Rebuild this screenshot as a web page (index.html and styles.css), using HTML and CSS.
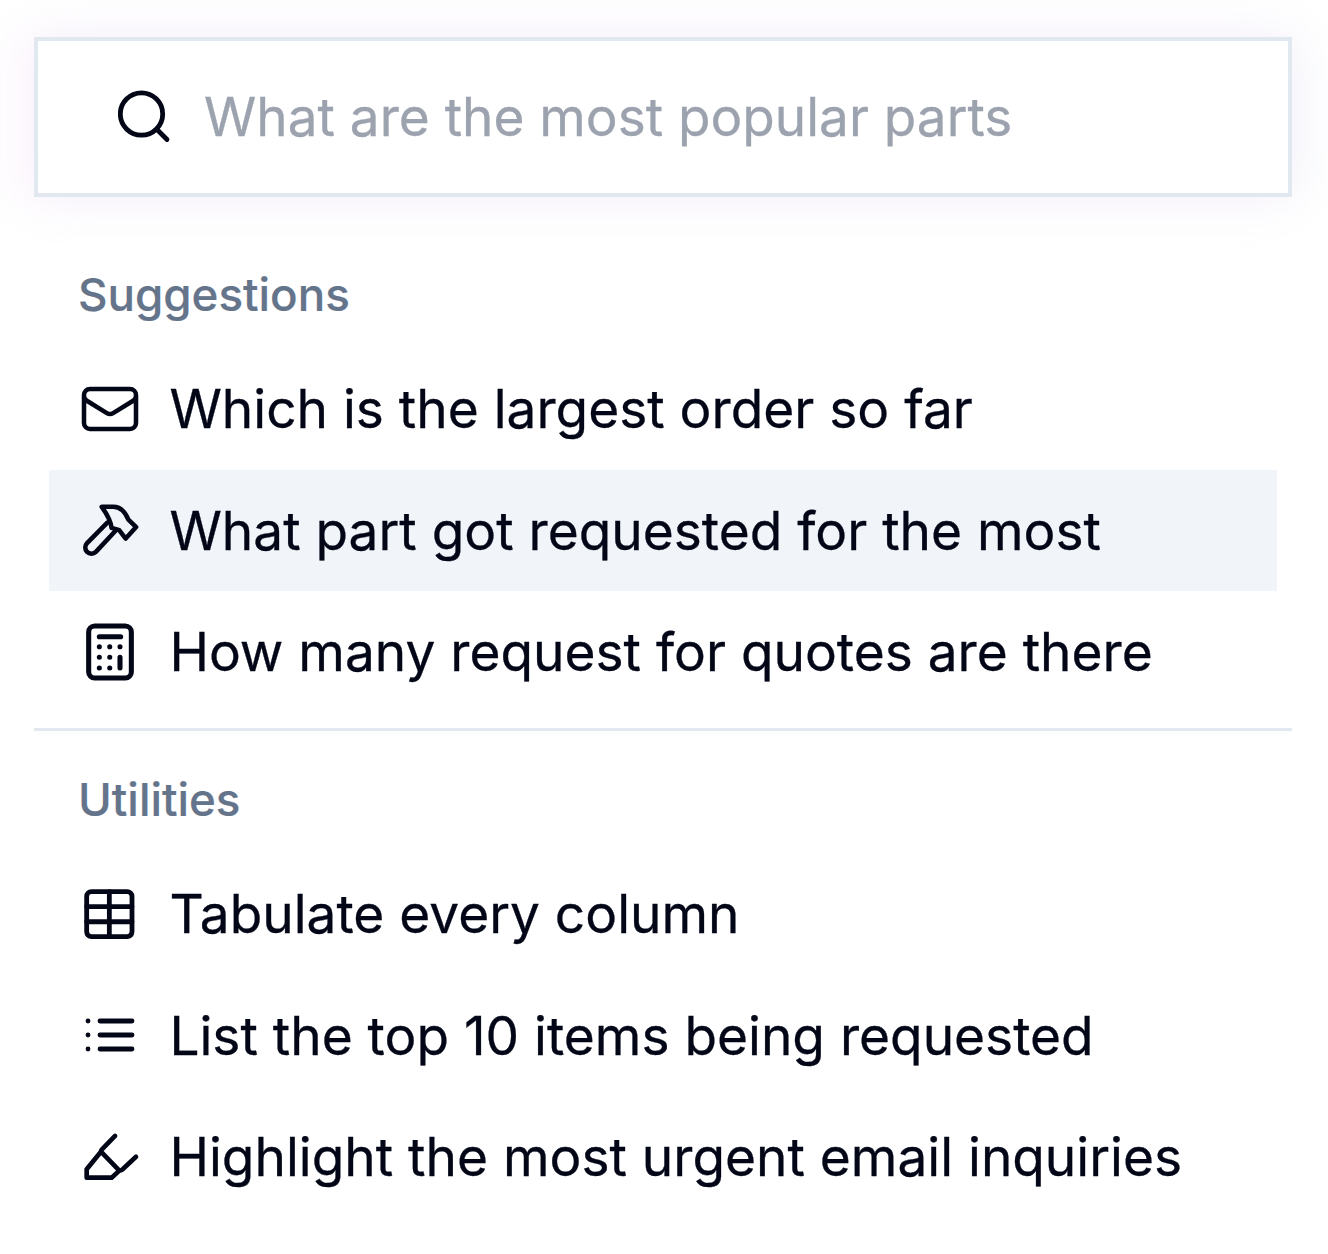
FILE: index.html
```html
<!DOCTYPE html>
<html lang="en">
<head>
    <meta charset="UTF-8">
    <title>Command menu</title>
    <link rel="stylesheet" href="styles.css">
</head>
<body>
<div class="menu">
    <!-- Search -->
    <div class="search">
        <svg class="search-icon" viewBox="0 0 54 54" fill="none" stroke="currentColor" stroke-width="4.8" stroke-linecap="round">
            <circle cx="23.500" cy="25" r="21.200"/>
            <path d="M39 40.500l10 10"/>
        </svg>
        <span class="placeholder">What are the most popular parts</span>
    </div>

    <!-- Suggestions -->
    <div class="group-title suggestions">Suggestions</div>
    <div class="item">
        <svg class="icon" viewBox="0 0 24 24" fill="none" stroke="currentColor" stroke-width="1.7" stroke-linecap="round" stroke-linejoin="round">
            <path d="M21.750 6.750v10.500a2.250 2.250 0 0 1-2.250 2.250h-15a2.250 2.250 0 0 1-2.250-2.250V6.750m19.500 0A2.250 2.250 0 0 0 19.500 4.500h-15a2.250 2.250 0 0 0-2.250 2.250m19.500 0v.243a2.250 2.250 0 0 1-1.070 1.916l-7.500 4.615a2.250 2.250 0 0 1-2.360 0L3.320 8.910a2.250 2.250 0 0 1-1.070-1.916V6.750"/>
        </svg>
        <span>Which is the largest order so far</span>
    </div>
    <div class="item active">
        <svg class="icon" viewBox="0 0 24 24" fill="none" stroke="currentColor" stroke-width="1.7" stroke-linecap="round" stroke-linejoin="round">
            <path d="M8.900 3.300h4.300c2.400 0 4.400 1.700 5.700 4.800l2.900 2.800-3.900 4.300-2.400-3.100-2.900-.9c-.3-2.500-1.300-4.600-3.700-7.900z"/>
            <path d="M11 9.200 3.400 16.900c-.9.9-.9 2.400 0 3.300s2.400.9 3.300 0l7.300-7.800"/>
        </svg>
        <span>What part got requested for the most</span>
    </div>
    <div class="item">
        <svg class="icon" viewBox="0 0 24 24" fill="none" stroke="currentColor" stroke-width="1.9" stroke-linecap="round" stroke-linejoin="round">
            <rect x="4" y="2.250" width="16" height="19.500" rx="2.250"/>
            <path d="M8 6.250h8M15.750 14v4M8 10h.01M11.900 10h.01M15.750 10h.01M8 14h.01M11.900 14h.01M8 18h.01M11.900 18h.01"/>
        </svg>
        <span>How many request for quotes are there</span>
    </div>

    <div class="divider"></div>

    <!-- Utilities -->
    <div class="group-title">Utilities</div>
    <div class="item">
        <svg class="icon" viewBox="0 0 24 24" fill="none" stroke="currentColor" stroke-width="1.8" stroke-linecap="round" stroke-linejoin="round">
            <rect x="3.250" y="3.600" width="17" height="16.900" rx="1.800"/>
            <path d="M11.750 3.600v16.900M3.250 9.250h17M3.250 14.900h17"/>
        </svg>
        <span>Tabulate every column</span>
    </div>
    <div class="item">
        <svg class="icon" viewBox="0 0 24 24" fill="none" stroke="currentColor" stroke-width="1.8" stroke-linecap="round" stroke-linejoin="round">
            <path d="M8.250 6.750h12M8.250 12h12M8.250 17.250h12M3.750 6.750h.01M3.750 12h.01M3.750 17.250h.01"/>
        </svg>
        <span>List the top 10 items being requested</span>
    </div>
    <div class="item">
        <svg class="icon" viewBox="0 0 24 24" fill="none" stroke="currentColor" stroke-width="1.75" stroke-linecap="round" stroke-linejoin="round">
            <path d="M13.900 4.100 9 9.100c-.3.300-.4.600-.4.900M21.750 11.900l-5 4.700c-.4.300-.8.500-1.250.5M8.600 10l6.900 7.100-2.900 2.650H3.250V16.600z"/>
        </svg>
        <span>Highlight the most urgent email inquiries</span>
    </div>
</div>
</body>
</html>
```
FILE: styles.css
```css
* {
    box-sizing: border-box;
    margin: 0;
    padding: 0;
}
body {
    font-family: 'Inter', 'Liberation Sans', sans-serif;
    background-color: #ffffff;
    color: #020617;
}
.menu {
    padding: 37px 36px 0 34px;
}

/* Search box */
.search {
    display: flex;
    align-items: center;
    height: 160px;
    padding-left: 80px;
    background-color: #ffffff;
    border: 4px solid #e2e8f0;
    box-shadow: -14px 0 44px 2px rgba(240, 195, 245, 0.16), 14px 0 44px 2px rgba(205, 215, 235, 0.18);
}
.search-icon {
    width: 54px;
    height: 54px;
    flex-shrink: 0;
    margin-top: -2px;
}
.placeholder {
    margin-left: 32px;
    margin-top: -1px;
    font-size: 53.100px;
    color: #9ca3af;
    -webkit-text-stroke: 0.3px #9ca3af;
}

/* Groups */
.group-title {
    margin-left: 44px;
    height: 60px;
    line-height: 60px;
    font-size: 45.700px;
    font-weight: 500;
    color: #64748b;
    -webkit-text-stroke: 0.2px #64748b;
}
.suggestions {
    margin-top: 68px;
    margin-bottom: 23px;
}
.divider {
    height: 3px;
    margin-top: 15px;
    margin-bottom: 39.250px;
    background-color: #e2e8f0;
}
.divider + .group-title {
    margin-bottom: 23px;
}

/* Rows */
.item {
    display: flex;
    align-items: center;
    gap: 29px;
    height: 121.500px;
    margin: 0 15px;
    padding-left: 29px;
    font-size: 53.200px;
    color: #020617;
    -webkit-text-stroke: 0.3px #020617;
}
.item span {
    margin-left: -1.600px;
}
.item.active {
    background-color: #f1f4f9;
}
.icon {
    width: 64px;
    height: 64px;
    flex-shrink: 0;
}
```
